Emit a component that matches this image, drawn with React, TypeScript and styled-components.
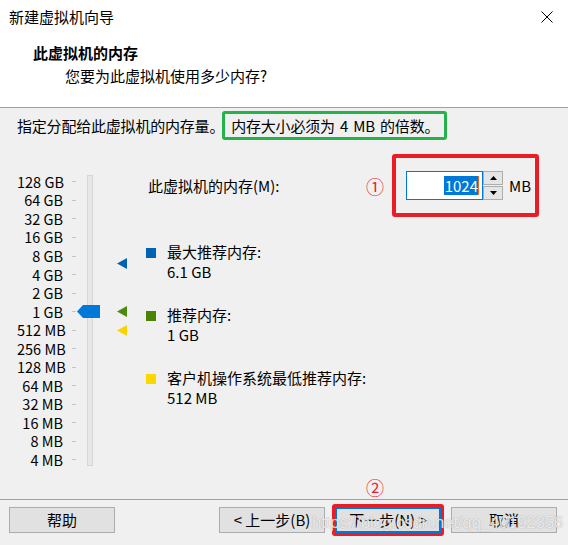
import React from "react";
import styled, { createGlobalStyle } from "styled-components";

const GlobalStyle = createGlobalStyle`
  html, body { margin: 0; padding: 0; background: #f0f0f0; }
  body {
    font-family: "Noto Sans CJK SC", "Noto Sans", sans-serif;
    font-size: 15px;
    color: #000;
  }
  * { box-sizing: border-box; }
`;

const Window = styled.div`
  position: relative;
  width: 568px;
  height: 545px;
  display: flex;
  flex-direction: column;
  background: #f0f0f0;
  overflow: hidden;
`;

const Header = styled.div`
  height: 108px;
  background: #fff;
  border-bottom: 1px solid #a0a0a0;
  display: flex;
  flex-direction: column;
`;

const TitleBar = styled.div`
  height: 34px;
  display: flex;
  align-items: center;
  justify-content: space-between;
  padding: 0 15px 0 9px;
  line-height: 20px;
`;

const Heading = styled.div`
  margin: 9px 0 0 33px;
  font-weight: 700;
  line-height: 20px;
`;

const SubHeading = styled.div`
  margin: 3px 0 0 65px;
  line-height: 20px;
`;

const Body = styled.div`
  flex: 1;
  display: flex;
  flex-direction: column;
`;

const InstructionRow = styled.div`
  display: flex;
  align-items: center;
  height: 29px;
  margin-top: 3px;
  padding-left: 17px;
  line-height: 20px;
  letter-spacing: -0.2px;
`;

const GreenNote = styled.span`
  display: inline-flex;
  align-items: center;
  height: 29px;
  margin-left: -2px;
  padding: 0 5px 0 6px;
  border: 3px solid #24b24b;
  border-radius: 3px;
  word-spacing: 2px;
`;

const Main = styled.div`
  display: flex;
  padding-left: 17px;
`;

const SliderBox = styled.div`
  position: relative;
  display: flex;
  width: 129px;
  padding-top: 32.7px;
`;

const Scale = styled.div`
  display: flex;
  flex-direction: column;
`;

const ScaleRow = styled.div`
  display: flex;
  align-items: center;
  height: 18.53px;
`;

const ScaleLabel = styled.span`
  width: 46px;
  text-align: right;
  font-size: 14.5px;
  line-height: 18px;
  white-space: nowrap;
`;

const Tick = styled.span`
  width: 4px;
  height: 1px;
  margin-left: 9px;
  background: #c4c4c4;
`;

const Track = styled.div`
  width: 6px;
  height: 291px;
  margin: 2.3px 0 0 11px;
  background: #e7e7e7;
  border: 1px solid #d6d6d6;
`;

const Thumb = styled.svg`
  position: absolute;
  left: 60px;
`;

const MarkerCol = styled.div`
  position: relative;
  width: 10px;
  margin-left: 24px;
`;

const Marker = styled.svg`
  position: absolute;
  left: 0;
`;

const RightPanel = styled.div`
  flex: 1;
  display: flex;
  flex-direction: column;
  padding-top: 14px;
`;

const MemoryRow = styled.div`
  display: flex;
  align-items: center;
  height: 63px;
`;

const MemoryLabel = styled.span`
  width: 220px;
  padding-left: 2px;
  line-height: 20px;
`;

const Callout = styled.span`
  width: 26px;
  color: #e8232a;
  font-size: 18px;
  line-height: 20px;
`;

const RedBox = styled.div<{ $thin?: boolean }>`
  display: flex;
  align-items: center;
  border: ${(p) => (p.$thin ? 3 : 4)}px solid #ec1c24;
  border-radius: 3px;
`;

const MemBox = styled(RedBox)`
  width: 147px;
  height: 63px;
  padding-left: 10px;
`;

const NumberInput = styled.div`
  width: 77px;
  height: 29px;
  background: #fff;
  border: 1px solid #0078d7;
  display: flex;
  align-items: center;
  justify-content: flex-end;
  padding-right: 3px;
`;

const Selected = styled.span`
  background: #0078d7;
  color: #fff;
  height: 19px;
  line-height: 19px;
  padding: 0 0 0 1px;
  border-right: 1px solid #e07020;
`;

const Spinner = styled.div`
  display: flex;
  flex-direction: column;
  width: 20px;
  height: 29px;
`;

const SpinButton = styled.div`
  flex: 1;
  display: flex;
  align-items: center;
  justify-content: center;
  background: #e5e5e5;
  border: 1px solid #adadad;
  & + & { margin-top: 1px; }
`;

const Unit = styled.span`
  margin-left: 6px;
  line-height: 20px;
`;

const Legend = styled.div`
  display: flex;
  flex-direction: column;
  gap: 23px;
  margin-top: 25px;
`;

const LegendItem = styled.div`
  display: grid;
  grid-template-columns: 10px 1fr;
  column-gap: 11px;
  line-height: 20px;
`;

const Swatch = styled.span<{ $color: string }>`
  width: 10px;
  height: 10px;
  margin-top: 6px;
  background: ${(p) => p.$color};
`;

const LegendText = styled.div`
  display: flex;
  flex-direction: column;
`;

const AnnotationRow = styled.div`
  margin-top: auto;
  padding: 0 0 2px 366px;
  height: 22px;
`;

const Footer = styled.div`
  height: 46px;
  border-top: 1px solid #a0a0a0;
  display: flex;
  align-items: center;
  padding: 0 11px 6px 9px;
`;

const Button = styled.button<{ $primary?: boolean }>`
  width: 106px;
  height: 26px;
  background: #e1e1e1;
  border: ${(p) => (p.$primary ? "2px solid #0078d7" : "1px solid #adadad")};
  font-family: "Noto Sans CJK SC", "Noto Sans", sans-serif;
  font-size: 15px;
  color: #000;
  padding: 0;
  display: flex;
  align-items: center;
  justify-content: center;
  line-height: 20px;
`;

const Spacer = styled.div`
  flex: 1;
`;

const NextWrap = styled(RedBox)`
  margin: 0 7px;
`;

const Watermark = styled.div`
  position: absolute;
  left: 312px;
  top: 513px;
  font-family: "Liberation Sans", Arial, sans-serif;
  font-size: 17px;
  letter-spacing: -0.3px;
  color: rgba(255, 255, 255, 0.8);
  text-shadow: 0 0 1px rgba(110, 110, 110, 0.7);
  pointer-events: none;
  white-space: nowrap;
`;

const labels = [
  "128 GB", "64 GB", "32 GB", "16 GB", "8 GB", "4 GB", "2 GB", "1 GB",
  "512 MB", "256 MB", "128 MB", "64 MB", "32 MB", "16 MB", "8 MB", "4 MB",
];
const ROW = 18.53;
const TOP = 32.7;
// 128 GB = 131072 MB -> index 0
const idx = (mb: number) => Math.log2(131072 / mb);
const rowCenter = (mb: number) => ROW / 2 + idx(mb) * ROW;

const markers = [
  { mb: 6.1 * 1024, color: "#0063b1" },
  { mb: 1024, color: "#4a8a0c" },
  { mb: 512, color: "#fbd300" },
];

export default function App() {
  return (
    <>
      <GlobalStyle />
      <Window>
        <Header>
          <TitleBar>
            <span>新建虚拟机向导</span>
            <svg width="12" height="12" viewBox="0 0 12 12">
              <path d="M0.5 0.5 L11.5 11.5 M11.5 0.5 L0.5 11.5" stroke="#000" strokeWidth="1" />
            </svg>
          </TitleBar>
          <Heading>此虚拟机的内存</Heading>
          <SubHeading>您要为此虚拟机使用多少内存?</SubHeading>
        </Header>
        <Body>
          <InstructionRow>
            <span>指定分配给此虚拟机的内存量。</span>
            <GreenNote>内存大小必须为 4 MB 的倍数。</GreenNote>
          </InstructionRow>
          <Main>
            <SliderBox>
              <Scale>
                {labels.map((l) => (
                  <ScaleRow key={l}>
                    <ScaleLabel>{l}</ScaleLabel>
                    <Tick />
                  </ScaleRow>
                ))}
              </Scale>
              <Track />
              <Thumb
                width="23"
                height="13"
                viewBox="0 0 23 13"
                style={{ top: TOP + rowCenter(1024) - 6.5 }}
              >
                <polygon points="0,6.5 6,0 23,0 23,13 6,13" fill="#0078d7" />
              </Thumb>
              <MarkerCol>
                {markers.map((m) => (
                  <Marker
                    key={m.color}
                    width="10"
                    height="11"
                    viewBox="0 0 10 11"
                    style={{ top: rowCenter(m.mb) - 5.5 }}
                  >
                    <polygon points="0,5.5 10,0 10,11" fill={m.color} />
                  </Marker>
                ))}
              </MarkerCol>
            </SliderBox>
            <RightPanel>
              <MemoryRow>
                <MemoryLabel>此虚拟机的内存(M):</MemoryLabel>
                <Callout>①</Callout>
                <MemBox>
                  <NumberInput>
                    <Selected>1024</Selected>
                  </NumberInput>
                  <Spinner>
                    <SpinButton>
                      <svg width="7" height="4" viewBox="0 0 7 4">
                        <polygon points="0,4 3.5,0 7,4" fill="#000" />
                      </svg>
                    </SpinButton>
                    <SpinButton>
                      <svg width="7" height="4" viewBox="0 0 7 4">
                        <polygon points="0,0 7,0 3.5,4" fill="#000" />
                      </svg>
                    </SpinButton>
                  </Spinner>
                  <Unit>MB</Unit>
                </MemBox>
              </MemoryRow>
              <Legend>
                <LegendItem>
                  <Swatch $color="#0063b1" />
                  <LegendText>
                    <span>最大推荐内存:</span>
                    <span>6.1 GB</span>
                  </LegendText>
                </LegendItem>
                <LegendItem>
                  <Swatch $color="#498205" />
                  <LegendText>
                    <span>推荐内存:</span>
                    <span>1 GB</span>
                  </LegendText>
                </LegendItem>
                <LegendItem>
                  <Swatch $color="#fcd800" />
                  <LegendText>
                    <span>客户机操作系统最低推荐内存:</span>
                    <span>512 MB</span>
                  </LegendText>
                </LegendItem>
              </Legend>
            </RightPanel>
          </Main>
          <AnnotationRow>
            <Callout>②</Callout>
          </AnnotationRow>
        </Body>
        <Footer>
          <Button>帮助</Button>
          <Spacer />
          <Button>&lt; 上一步(B)</Button>
          <NextWrap $thin>
            <Button $primary>下一步(N) &gt;</Button>
          </NextWrap>
          <Button>取消</Button>
        </Footer>
        <Watermark>https://blog.csdn.net/qq_40192356</Watermark>
      </Window>
    </>
  );
}
